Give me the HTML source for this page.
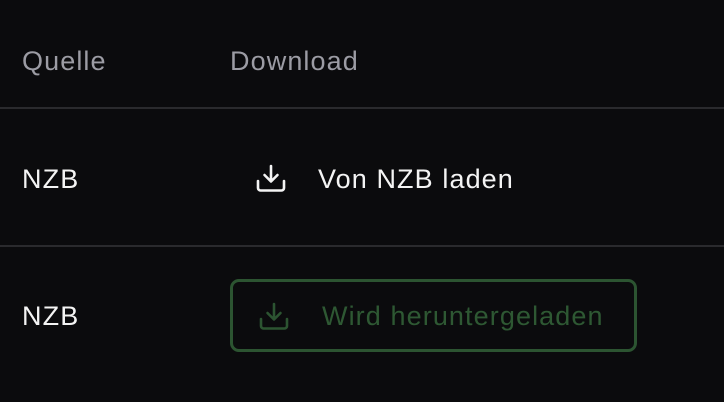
<!DOCTYPE html>
<html><head><style>
html,body{margin:0;padding:0;background:#0b0b0d;width:724px;height:402px;overflow:hidden;font-family:"Liberation Sans",sans-serif;}
.t{position:absolute;white-space:nowrap;font-size:27px;line-height:1;letter-spacing:1.1px;}
.h{color:#9c9ca4;}
.w{color:#f4f4f4;}
.line{position:absolute;left:0;width:724px;height:2px;background:#2a2a2d;}
.btn{position:absolute;left:230px;top:279px;width:401px;height:67px;border:3px solid #2c5431;border-radius:9px;}
svg{position:absolute;}
</style></head><body>
<div class="t h" style="left:22px;top:48px">Quelle</div>
<div class="t h" style="left:230px;top:48px">Download</div>
<div class="line" style="top:107px"></div>
<div class="t w" style="left:22px;top:166px">NZB</div>
<svg style="left:255px;top:164px" width="32" height="30" viewBox="0 0 32 30" fill="none" stroke="#f4f4f4" stroke-width="2.6" stroke-linecap="round" stroke-linejoin="round"><path d="M16 2v15M9.5 11l6.5 6.5 6.5-6.5M3 17v7a2.5 2.5 0 0 0 2.5 2.5h21A2.5 2.5 0 0 0 29 24v-7"/></svg>
<div class="t w" style="left:318px;top:166px">Von NZB laden</div>
<div class="line" style="top:245px"></div>
<div class="t w" style="left:22px;top:303px">NZB</div>
<div class="btn"></div>
<svg style="left:258px;top:302px" width="32" height="30" viewBox="0 0 32 30" fill="none" stroke="#2c5431" stroke-width="2.6" stroke-linecap="round" stroke-linejoin="round"><path d="M16 2v15M9.5 11l6.5 6.5 6.5-6.5M3 17v7a2.5 2.5 0 0 0 2.5 2.5h21A2.5 2.5 0 0 0 29 24v-7"/></svg>
<div class="t" style="left:322px;top:303px;color:#2e5833">Wird heruntergeladen</div>
</body></html>
